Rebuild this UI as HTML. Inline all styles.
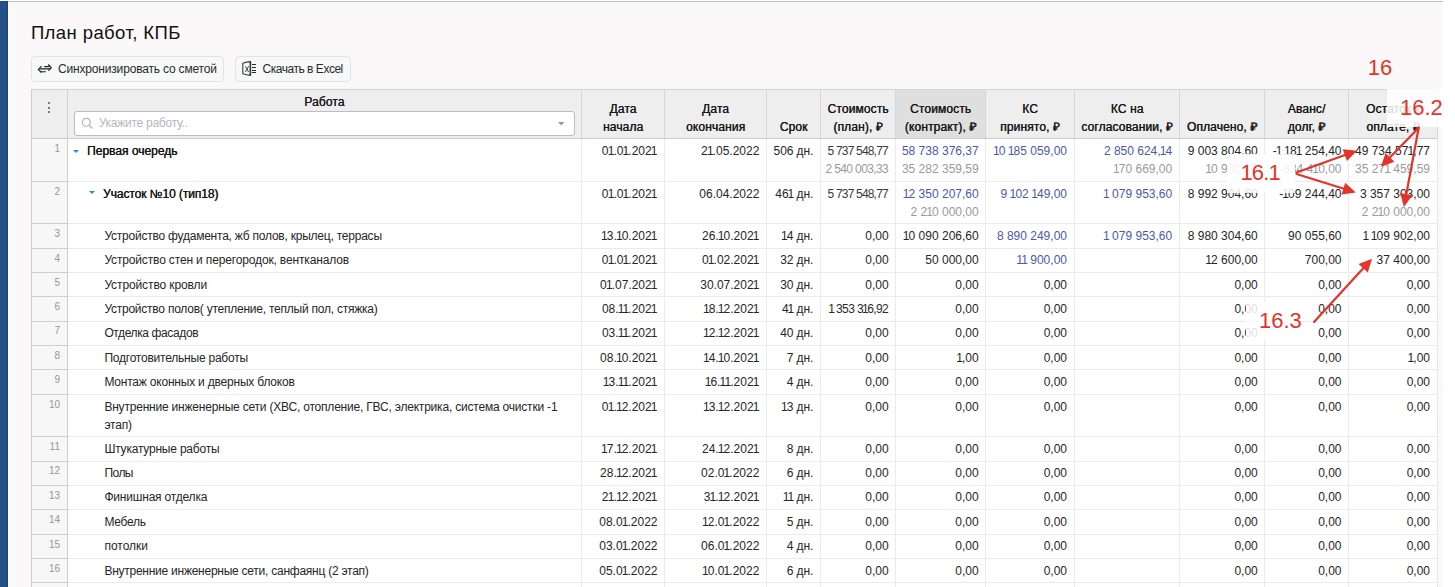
<!DOCTYPE html>
<html><head><meta charset="utf-8">
<style>
html,body{margin:0;padding:0;}
body{width:1455px;height:587px;overflow:hidden;background:#fff;position:relative;font-family:"Liberation Sans",sans-serif;}
.a{position:absolute;}
.t{position:absolute;white-space:nowrap;line-height:0;font-family:"Liberation Sans",sans-serif;}
</style></head><body>
<!-- left bar + page bg -->
<div class="a" style="left:0;top:1px;width:7px;height:586px;background:#255087"></div>
<div class="a" style="left:7px;top:1px;width:1px;height:586px;background:#17427b"></div>
<div class="a" style="left:8px;top:1px;width:1435px;height:1px;background:#babdc5"></div>
<div class="a" style="left:9px;top:2px;width:1434px;height:585px;background:#faf8f9"></div>

<!-- buttons -->
<div class="a" style="left:31px;top:56px;width:191px;height:24px;border:1px solid #e1e3e4;border-radius:4px;background:#f7f9f9"></div>
<div class="a" style="left:235px;top:56px;width:114px;height:24px;border:1px solid #e1e3e4;border-radius:4px;background:#f7f9f9"></div>
<svg class="a" style="left:34px;top:60px" width="22" height="18" viewBox="34 60 22 18">
  <path d="M48.3 64.5 L51.3 67.7 L48.3 70.7" stroke="#222" stroke-width="1.2" fill="none" stroke-linejoin="miter"/>
  <path d="M41.5 66.2 L38.4 69.4 L41.5 72.6" stroke="#222" stroke-width="1.2" fill="none" stroke-linejoin="miter"/>
  <path d="M39.5 68.9 H50.5 M44.2 66.6 H49.2 M40.5 71.8 H45.8" stroke="#222" stroke-width="1.1" fill="none"/>
</svg>
<svg class="a" style="left:238px;top:58px" width="22" height="20" viewBox="238 58 22 20">
  <path d="M242.8 63.2 Q246.5 62 250.4 61.6 V75.4 Q246.5 75 242.8 73.8 Z" stroke="#3a3a3a" stroke-width="1.1" fill="none"/>
  <path d="M250.4 61.6 V75.4" stroke="#3a3a3a" stroke-width="1.6" fill="none"/>
  <path d="M245.4 66.3 L248.6 72 M248.6 66.3 L245.4 72" stroke="#444" stroke-width="1" fill="none"/>
  <path d="M252 64.5 H256 M252 67.5 H256 M252 70.5 H256 M252 72.5 H256" stroke="#2a2a2a" stroke-width="1" fill="none"/>
</svg>

<!-- table base -->
<div class="a" style="left:31px;top:89px;width:1407px;height:498px;background:#fff"></div>
<!-- header bg -->
<div class="a" style="left:31px;top:89px;width:1407px;height:50px;background:#eeeeee"></div>
<div class="a" style="left:896px;top:90px;width:89px;height:48px;background:#dfdfdf"></div>
<!-- row-number column bg -->
<div class="a" style="left:31px;top:139px;width:37px;height:448px;background:#f7f7f7"></div>
<div class="a" style="left:31px;top:89px;width:1407px;height:1px;background:#d3d3d3"></div>
<div class="a" style="left:31px;top:138px;width:1407px;height:1px;background:#cdcdcd"></div>
<div class="a" style="left:68px;top:181px;width:1369px;height:1px;background:#ebebeb"></div>
<div class="a" style="left:32px;top:181px;width:35px;height:1px;background:#d0d0d0"></div>
<div class="a" style="left:68px;top:223px;width:1369px;height:1px;background:#ebebeb"></div>
<div class="a" style="left:32px;top:223px;width:35px;height:1px;background:#d0d0d0"></div>
<div class="a" style="left:68px;top:248px;width:1369px;height:1px;background:#ebebeb"></div>
<div class="a" style="left:32px;top:248px;width:35px;height:1px;background:#d0d0d0"></div>
<div class="a" style="left:68px;top:272px;width:1369px;height:1px;background:#ebebeb"></div>
<div class="a" style="left:32px;top:272px;width:35px;height:1px;background:#d0d0d0"></div>
<div class="a" style="left:68px;top:296px;width:1369px;height:1px;background:#ebebeb"></div>
<div class="a" style="left:32px;top:296px;width:35px;height:1px;background:#d0d0d0"></div>
<div class="a" style="left:68px;top:321px;width:1369px;height:1px;background:#ebebeb"></div>
<div class="a" style="left:32px;top:321px;width:35px;height:1px;background:#d0d0d0"></div>
<div class="a" style="left:68px;top:345px;width:1369px;height:1px;background:#ebebeb"></div>
<div class="a" style="left:32px;top:345px;width:35px;height:1px;background:#d0d0d0"></div>
<div class="a" style="left:68px;top:369px;width:1369px;height:1px;background:#ebebeb"></div>
<div class="a" style="left:32px;top:369px;width:35px;height:1px;background:#d0d0d0"></div>
<div class="a" style="left:68px;top:394px;width:1369px;height:1px;background:#ebebeb"></div>
<div class="a" style="left:32px;top:394px;width:35px;height:1px;background:#d0d0d0"></div>
<div class="a" style="left:68px;top:436px;width:1369px;height:1px;background:#ebebeb"></div>
<div class="a" style="left:32px;top:436px;width:35px;height:1px;background:#d0d0d0"></div>
<div class="a" style="left:68px;top:461px;width:1369px;height:1px;background:#ebebeb"></div>
<div class="a" style="left:32px;top:461px;width:35px;height:1px;background:#d0d0d0"></div>
<div class="a" style="left:68px;top:485px;width:1369px;height:1px;background:#ebebeb"></div>
<div class="a" style="left:32px;top:485px;width:35px;height:1px;background:#d0d0d0"></div>
<div class="a" style="left:68px;top:509px;width:1369px;height:1px;background:#ebebeb"></div>
<div class="a" style="left:32px;top:509px;width:35px;height:1px;background:#d0d0d0"></div>
<div class="a" style="left:68px;top:534px;width:1369px;height:1px;background:#ebebeb"></div>
<div class="a" style="left:32px;top:534px;width:35px;height:1px;background:#d0d0d0"></div>
<div class="a" style="left:68px;top:558px;width:1369px;height:1px;background:#ebebeb"></div>
<div class="a" style="left:32px;top:558px;width:35px;height:1px;background:#d0d0d0"></div>
<div class="a" style="left:68px;top:582px;width:1369px;height:1px;background:#ebebeb"></div>
<div class="a" style="left:32px;top:582px;width:35px;height:1px;background:#d0d0d0"></div>
<div class="a" style="left:31px;top:89px;width:1px;height:498px;background:#cfcfcf"></div>
<div class="a" style="left:67px;top:89px;width:1px;height:498px;background:#cfcfcf"></div>
<div class="a" style="left:581px;top:90px;width:1px;height:48px;background:#d6d6d6"></div>
<div class="a" style="left:581px;top:139px;width:1px;height:448px;background:#ebebeb"></div>
<div class="a" style="left:664px;top:90px;width:1px;height:48px;background:#d6d6d6"></div>
<div class="a" style="left:664px;top:139px;width:1px;height:448px;background:#ebebeb"></div>
<div class="a" style="left:766px;top:90px;width:1px;height:48px;background:#d6d6d6"></div>
<div class="a" style="left:766px;top:139px;width:1px;height:448px;background:#ebebeb"></div>
<div class="a" style="left:820px;top:90px;width:1px;height:48px;background:#d6d6d6"></div>
<div class="a" style="left:820px;top:139px;width:1px;height:448px;background:#ebebeb"></div>
<div class="a" style="left:895px;top:90px;width:1px;height:48px;background:#d6d6d6"></div>
<div class="a" style="left:895px;top:139px;width:1px;height:448px;background:#ebebeb"></div>
<div class="a" style="left:985px;top:90px;width:1px;height:48px;background:#d6d6d6"></div>
<div class="a" style="left:985px;top:139px;width:1px;height:448px;background:#ebebeb"></div>
<div class="a" style="left:1074px;top:90px;width:1px;height:48px;background:#d6d6d6"></div>
<div class="a" style="left:1074px;top:139px;width:1px;height:448px;background:#ebebeb"></div>
<div class="a" style="left:1179px;top:90px;width:1px;height:48px;background:#d6d6d6"></div>
<div class="a" style="left:1179px;top:139px;width:1px;height:448px;background:#ebebeb"></div>
<div class="a" style="left:1264px;top:90px;width:1px;height:48px;background:#d6d6d6"></div>
<div class="a" style="left:1264px;top:139px;width:1px;height:448px;background:#ebebeb"></div>
<div class="a" style="left:1348px;top:90px;width:1px;height:48px;background:#d6d6d6"></div>
<div class="a" style="left:1348px;top:139px;width:1px;height:448px;background:#ebebeb"></div>
<div class="a" style="left:1437px;top:89px;width:1px;height:50px;background:#d6d6d6"></div>
<div class="a" style="left:1437px;top:139px;width:1px;height:448px;background:#e6e6e6"></div>
<!-- search input -->
<div class="a" style="left:74px;top:111px;width:499px;height:23px;border:1px solid #b9bdc6;border-radius:3px;background:#fff"></div>
<svg class="a" style="left:81px;top:117px" width="13" height="13" viewBox="0 0 13 13">
  <circle cx="5.3" cy="5.3" r="4" stroke="#b4b8c2" stroke-width="1.2" fill="none"/>
  <path d="M8.2 8.2 L11.5 11.5" stroke="#b4b8c2" stroke-width="1.3"/>
</svg>
<svg class="a" style="left:558px;top:122px" width="7" height="4" viewBox="0 0 7 4"><path d="M0 0 H6.5 L3.25 3.5 Z" fill="#9a9a9a"/></svg>
<!-- header dots -->
<div class="a" style="left:48px;top:102px;width:2px;height:2px;background:#555;border-radius:1px"></div>
<div class="a" style="left:48px;top:106.5px;width:2px;height:2px;background:#555;border-radius:1px"></div>
<div class="a" style="left:48px;top:111px;width:2px;height:2px;background:#555;border-radius:1px"></div>
<!-- tree carets -->
<svg class="a" style="left:72.5px;top:149.5px" width="7" height="4" viewBox="0 0 7 4"><path d="M0 0 H6 L3 3 Z" fill="#1e90e6"/></svg>
<svg class="a" style="left:88.8px;top:190.5px" width="7" height="4" viewBox="0 0 7 4"><path d="M0 0 H6 L3 3 Z" fill="#1e90e6"/></svg>

<div class="t" style="left:30.90px;top:32.59px;font-size:18.5px;color:#111;letter-spacing:0.413px">План работ, КПБ</div>
<div class="t" style="left:58.00px;top:68.84px;font-size:12px;color:#2a2a2a;letter-spacing:-0.175px">Синхронизировать со сметой</div>
<div class="t" style="left:262.60px;top:68.84px;font-size:12px;color:#2a2a2a;letter-spacing:-0.478px">Скачать в Excel</div>
<div class="t" style="left:304.20px;top:101.84px;font-size:12px;text-shadow:0.35px 0 0 #1a1a1a;color:#1a1a1a;letter-spacing:0.120px">Работа</div>
<div class="t" style="left:98.70px;top:122.84px;font-size:12px;color:#b3b7c0;letter-spacing:-0.254px">Укажите работу..</div>
<div class="t" style="left:609.53px;top:108.84px;font-size:12px;text-shadow:0.35px 0 0 #1a1a1a;color:#1a1a1a;letter-spacing:0.120px">Дата</div>
<div class="t" style="left:602.88px;top:126.84px;font-size:12px;text-shadow:0.35px 0 0 #1a1a1a;color:#1a1a1a;letter-spacing:0.120px">начала</div>
<div class="t" style="left:702.03px;top:108.84px;font-size:12px;text-shadow:0.35px 0 0 #1a1a1a;color:#1a1a1a;letter-spacing:0.120px">Дата</div>
<div class="t" style="left:685.96px;top:126.84px;font-size:12px;text-shadow:0.35px 0 0 #1a1a1a;color:#1a1a1a;letter-spacing:0.120px">окончания</div>
<div class="t" style="left:779.68px;top:126.84px;font-size:12px;text-shadow:0.35px 0 0 #1a1a1a;color:#1a1a1a;letter-spacing:0.120px">Срок</div>
<div class="t" style="left:827.48px;top:108.84px;font-size:12px;text-shadow:0.35px 0 0 #1a1a1a;color:#1a1a1a;letter-spacing:0.120px">Стоимость</div>
<div class="t" style="left:833.29px;top:126.84px;font-size:12px;text-shadow:0.35px 0 0 #1a1a1a;color:#1a1a1a;letter-spacing:0.120px">(план), ₽</div>
<div class="t" style="left:909.98px;top:108.84px;font-size:12px;text-shadow:0.35px 0 0 #1a1a1a;color:#1a1a1a;letter-spacing:0.120px">Стоимость</div>
<div class="t" style="left:904.74px;top:126.84px;font-size:12px;text-shadow:0.35px 0 0 #1a1a1a;color:#1a1a1a;letter-spacing:0.120px">(контракт), ₽</div>
<div class="t" style="left:1022.18px;top:108.84px;font-size:12px;text-shadow:0.35px 0 0 #1a1a1a;color:#1a1a1a;letter-spacing:0.120px">КС</div>
<div class="t" style="left:1000.11px;top:126.84px;font-size:12px;text-shadow:0.35px 0 0 #1a1a1a;color:#1a1a1a;letter-spacing:0.120px">принято, ₽</div>
<div class="t" style="left:1110.68px;top:108.84px;font-size:12px;text-shadow:0.35px 0 0 #1a1a1a;color:#1a1a1a;letter-spacing:0.120px">КС на</div>
<div class="t" style="left:1081.15px;top:126.84px;font-size:12px;text-shadow:0.35px 0 0 #1a1a1a;color:#1a1a1a;letter-spacing:0.120px">согласовании, ₽</div>
<div class="t" style="left:1186.83px;top:126.84px;font-size:12px;text-shadow:0.35px 0 0 #1a1a1a;color:#1a1a1a;letter-spacing:0.120px">Оплачено, ₽</div>
<div class="t" style="left:1287.76px;top:108.84px;font-size:12px;text-shadow:0.35px 0 0 #1a1a1a;color:#1a1a1a;letter-spacing:0.120px">Аванс/</div>
<div class="t" style="left:1287.64px;top:126.84px;font-size:12px;text-shadow:0.35px 0 0 #1a1a1a;color:#1a1a1a;letter-spacing:0.120px">долг, ₽</div>
<div class="t" style="left:1366.03px;top:108.84px;font-size:12px;text-shadow:0.35px 0 0 #1a1a1a;color:#1a1a1a;letter-spacing:0.120px">Остаток к</div>
<div class="t" style="left:1366.37px;top:126.84px;font-size:12px;text-shadow:0.35px 0 0 #1a1a1a;color:#1a1a1a;letter-spacing:0.120px">оплате, ₽</div>
<div class="t" style="left:87.00px;top:150.64px;font-size:12px;text-shadow:0.35px 0 0 #151515;color:#151515;letter-spacing:-0.008px">Первая очередь</div>
<div class="t" style="left:54.44px;top:149.14px;font-size:10px;color:#969696;letter-spacing:0.000px">1</div>
<div class="t" style="left:103.00px;top:193.84px;font-size:12px;text-shadow:0.35px 0 0 #151515;color:#151515;letter-spacing:-0.081px">Участок №10 (тип18)</div>
<div class="t" style="left:54.44px;top:192.34px;font-size:10px;color:#969696;letter-spacing:0.000px">2</div>
<div class="t" style="left:104.40px;top:235.94px;font-size:12px;color:#262626;letter-spacing:-0.225px">Устройство фудамента, жб полов, крылец, террасы</div>
<div class="t" style="left:54.44px;top:234.44px;font-size:10px;color:#969696;letter-spacing:0.000px">3</div>
<div class="t" style="left:104.40px;top:260.24px;font-size:12px;color:#262626;letter-spacing:-0.150px">Устройство стен и перегородок, вентканалов</div>
<div class="t" style="left:54.44px;top:258.74px;font-size:10px;color:#969696;letter-spacing:0.000px">4</div>
<div class="t" style="left:104.40px;top:284.54px;font-size:12px;color:#262626;letter-spacing:-0.107px">Устройство кровли</div>
<div class="t" style="left:54.44px;top:283.04px;font-size:10px;color:#969696;letter-spacing:0.000px">5</div>
<div class="t" style="left:104.40px;top:308.74px;font-size:12px;color:#262626;letter-spacing:-0.236px">Устройство полов( утепление, теплый пол, стяжка)</div>
<div class="t" style="left:54.44px;top:307.24px;font-size:10px;color:#969696;letter-spacing:0.000px">6</div>
<div class="t" style="left:104.40px;top:332.74px;font-size:12px;color:#262626;letter-spacing:-0.380px">Отделка фасадов</div>
<div class="t" style="left:54.44px;top:331.24px;font-size:10px;color:#969696;letter-spacing:0.000px">7</div>
<div class="t" style="left:104.40px;top:357.64px;font-size:12px;color:#262626;letter-spacing:-0.222px">Подготовительные работы</div>
<div class="t" style="left:54.44px;top:356.14px;font-size:10px;color:#969696;letter-spacing:0.000px">8</div>
<div class="t" style="left:104.40px;top:381.74px;font-size:12px;color:#262626;letter-spacing:-0.203px">Монтаж оконных и дверных блоков</div>
<div class="t" style="left:54.44px;top:380.24px;font-size:10px;color:#969696;letter-spacing:0.000px">9</div>
<div class="t" style="left:104.40px;top:406.74px;font-size:12px;color:#262626;letter-spacing:-0.201px">Внутренние инженерные сети (ХВС, отопление, ГВС, электрика, система очистки -1</div>
<div class="t" style="left:48.88px;top:405.24px;font-size:10px;color:#969696;letter-spacing:0.000px">10</div>
<div class="t" style="left:104.40px;top:448.64px;font-size:12px;color:#262626;letter-spacing:-0.208px">Штукатурные работы</div>
<div class="t" style="left:49.61px;top:447.14px;font-size:10px;color:#969696;letter-spacing:0.000px">11</div>
<div class="t" style="left:104.40px;top:472.84px;font-size:12px;color:#262626;letter-spacing:-0.524px">Полы</div>
<div class="t" style="left:48.88px;top:471.34px;font-size:10px;color:#969696;letter-spacing:0.000px">12</div>
<div class="t" style="left:104.40px;top:497.44px;font-size:12px;color:#262626;letter-spacing:-0.193px">Финишная отделка</div>
<div class="t" style="left:48.88px;top:495.94px;font-size:10px;color:#969696;letter-spacing:0.000px">13</div>
<div class="t" style="left:104.40px;top:521.64px;font-size:12px;color:#262626;letter-spacing:-0.247px">Мебель</div>
<div class="t" style="left:48.88px;top:520.13px;font-size:10px;color:#969696;letter-spacing:0.000px">14</div>
<div class="t" style="left:104.40px;top:546.04px;font-size:12px;color:#262626;letter-spacing:-0.007px">потолки</div>
<div class="t" style="left:48.88px;top:544.53px;font-size:10px;color:#969696;letter-spacing:0.000px">15</div>
<div class="t" style="left:104.40px;top:570.84px;font-size:12px;color:#262626;letter-spacing:-0.250px">Внутренние инженерные сети, санфаянц (2 этап)</div>
<div class="t" style="left:48.88px;top:569.33px;font-size:10px;color:#969696;letter-spacing:0.000px">16</div>
<div class="t" style="left:104.40px;top:424.64px;font-size:12px;color:#262626;letter-spacing:-0.198px">этап)</div>
<div class="t" style="left:601.87px;top:150.64px;font-size:12px;color:#262626;letter-spacing:0.000px">0<span style="margin-left:-0.90px;letter-spacing:-0.900px">1</span>.0<span style="margin-left:-0.90px;letter-spacing:-0.900px">1</span>.202<span style="margin-left:-0.90px;letter-spacing:-0.900px">1</span></div>
<div class="t" style="left:701.10px;top:150.64px;font-size:12px;color:#262626;letter-spacing:0.000px">2<span style="margin-left:-0.90px;letter-spacing:-0.900px">1</span>.05.2022</div>
<div class="t" style="left:773.57px;top:150.64px;font-size:12px;color:#262626;letter-spacing:-0.100px">506 дн.</div>
<div class="t" style="left:601.87px;top:193.84px;font-size:12px;color:#262626;letter-spacing:0.000px">0<span style="margin-left:-0.90px;letter-spacing:-0.900px">1</span>.0<span style="margin-left:-0.90px;letter-spacing:-0.900px">1</span>.202<span style="margin-left:-0.90px;letter-spacing:-0.900px">1</span></div>
<div class="t" style="left:699.34px;top:193.84px;font-size:12px;color:#262626;letter-spacing:0.000px">06.04.2022</div>
<div class="t" style="left:775.34px;top:193.84px;font-size:12px;color:#262626;letter-spacing:-0.100px">46<span style="margin-left:-0.90px;letter-spacing:-1.000px">1</span> дн.</div>
<div class="t" style="left:601.88px;top:235.94px;font-size:12px;color:#262626;letter-spacing:0.000px"><span style="margin-left:-0.90px;letter-spacing:-0.900px">1</span>3.<span style="margin-left:-0.90px;letter-spacing:-0.900px">1</span>0.202<span style="margin-left:-0.90px;letter-spacing:-0.900px">1</span></div>
<div class="t" style="left:702.00px;top:235.94px;font-size:12px;color:#262626;letter-spacing:0.000px">26.<span style="margin-left:-0.90px;letter-spacing:-0.900px">1</span>0.202<span style="margin-left:-0.90px;letter-spacing:-0.900px">1</span></div>
<div class="t" style="left:781.92px;top:235.94px;font-size:12px;color:#262626;letter-spacing:-0.100px"><span style="margin-left:-0.90px;letter-spacing:-1.000px">1</span>4 дн.</div>
<div class="t" style="left:601.87px;top:260.24px;font-size:12px;color:#262626;letter-spacing:0.000px">0<span style="margin-left:-0.90px;letter-spacing:-0.900px">1</span>.0<span style="margin-left:-0.90px;letter-spacing:-0.900px">1</span>.202<span style="margin-left:-0.90px;letter-spacing:-0.900px">1</span></div>
<div class="t" style="left:701.98px;top:260.24px;font-size:12px;color:#262626;letter-spacing:0.000px">0<span style="margin-left:-0.90px;letter-spacing:-0.900px">1</span>.02.202<span style="margin-left:-0.90px;letter-spacing:-0.900px">1</span></div>
<div class="t" style="left:780.15px;top:260.24px;font-size:12px;color:#262626;letter-spacing:-0.100px">32 дн.</div>
<div class="t" style="left:600.08px;top:284.54px;font-size:12px;color:#262626;letter-spacing:0.000px">0<span style="margin-left:-0.90px;letter-spacing:-0.900px">1</span>.07.202<span style="margin-left:-0.90px;letter-spacing:-0.900px">1</span></div>
<div class="t" style="left:700.22px;top:284.54px;font-size:12px;color:#262626;letter-spacing:0.000px">30.07.202<span style="margin-left:-0.90px;letter-spacing:-0.900px">1</span></div>
<div class="t" style="left:780.15px;top:284.54px;font-size:12px;color:#262626;letter-spacing:-0.100px">30 дн.</div>
<div class="t" style="left:601.88px;top:308.74px;font-size:12px;color:#262626;letter-spacing:0.000px">08.<span style="margin-left:-0.90px;letter-spacing:-0.900px">1</span><span style="margin-left:-0.90px;letter-spacing:-0.900px">1</span>.202<span style="margin-left:-0.90px;letter-spacing:-0.900px">1</span></div>
<div class="t" style="left:703.78px;top:308.74px;font-size:12px;color:#262626;letter-spacing:0.000px"><span style="margin-left:-0.90px;letter-spacing:-0.900px">1</span>8.<span style="margin-left:-0.90px;letter-spacing:-0.900px">1</span>2.202<span style="margin-left:-0.90px;letter-spacing:-0.900px">1</span></div>
<div class="t" style="left:781.92px;top:308.74px;font-size:12px;color:#262626;letter-spacing:-0.100px">4<span style="margin-left:-0.90px;letter-spacing:-1.000px">1</span> дн.</div>
<div class="t" style="left:601.88px;top:332.74px;font-size:12px;color:#262626;letter-spacing:0.000px">03.<span style="margin-left:-0.90px;letter-spacing:-0.900px">1</span><span style="margin-left:-0.90px;letter-spacing:-0.900px">1</span>.202<span style="margin-left:-0.90px;letter-spacing:-0.900px">1</span></div>
<div class="t" style="left:703.78px;top:332.74px;font-size:12px;color:#262626;letter-spacing:0.000px"><span style="margin-left:-0.90px;letter-spacing:-0.900px">1</span>2.<span style="margin-left:-0.90px;letter-spacing:-0.900px">1</span>2.202<span style="margin-left:-0.90px;letter-spacing:-0.900px">1</span></div>
<div class="t" style="left:780.15px;top:332.74px;font-size:12px;color:#262626;letter-spacing:-0.100px">40 дн.</div>
<div class="t" style="left:600.10px;top:357.64px;font-size:12px;color:#262626;letter-spacing:0.000px">08.<span style="margin-left:-0.90px;letter-spacing:-0.900px">1</span>0.202<span style="margin-left:-0.90px;letter-spacing:-0.900px">1</span></div>
<div class="t" style="left:703.78px;top:357.64px;font-size:12px;color:#262626;letter-spacing:0.000px"><span style="margin-left:-0.90px;letter-spacing:-0.900px">1</span>4.<span style="margin-left:-0.90px;letter-spacing:-0.900px">1</span>0.202<span style="margin-left:-0.90px;letter-spacing:-0.900px">1</span></div>
<div class="t" style="left:786.72px;top:357.64px;font-size:12px;color:#262626;letter-spacing:-0.100px">7 дн.</div>
<div class="t" style="left:603.66px;top:381.74px;font-size:12px;color:#262626;letter-spacing:0.000px"><span style="margin-left:-0.90px;letter-spacing:-0.900px">1</span>3.<span style="margin-left:-0.90px;letter-spacing:-0.900px">1</span><span style="margin-left:-0.90px;letter-spacing:-0.900px">1</span>.202<span style="margin-left:-0.90px;letter-spacing:-0.900px">1</span></div>
<div class="t" style="left:705.56px;top:381.74px;font-size:12px;color:#262626;letter-spacing:0.000px"><span style="margin-left:-0.90px;letter-spacing:-0.900px">1</span>6.<span style="margin-left:-0.90px;letter-spacing:-0.900px">1</span><span style="margin-left:-0.90px;letter-spacing:-0.900px">1</span>.202<span style="margin-left:-0.90px;letter-spacing:-0.900px">1</span></div>
<div class="t" style="left:786.72px;top:381.74px;font-size:12px;color:#262626;letter-spacing:-0.100px">4 дн.</div>
<div class="t" style="left:601.87px;top:406.74px;font-size:12px;color:#262626;letter-spacing:0.000px">0<span style="margin-left:-0.90px;letter-spacing:-0.900px">1</span>.<span style="margin-left:-0.90px;letter-spacing:-0.900px">1</span>2.202<span style="margin-left:-0.90px;letter-spacing:-0.900px">1</span></div>
<div class="t" style="left:703.78px;top:406.74px;font-size:12px;color:#262626;letter-spacing:0.000px"><span style="margin-left:-0.90px;letter-spacing:-0.900px">1</span>3.<span style="margin-left:-0.90px;letter-spacing:-0.900px">1</span>2.202<span style="margin-left:-0.90px;letter-spacing:-0.900px">1</span></div>
<div class="t" style="left:781.92px;top:406.74px;font-size:12px;color:#262626;letter-spacing:-0.100px"><span style="margin-left:-0.90px;letter-spacing:-1.000px">1</span>3 дн.</div>
<div class="t" style="left:601.88px;top:448.64px;font-size:12px;color:#262626;letter-spacing:0.000px"><span style="margin-left:-0.90px;letter-spacing:-0.900px">1</span>7.<span style="margin-left:-0.90px;letter-spacing:-0.900px">1</span>2.202<span style="margin-left:-0.90px;letter-spacing:-0.900px">1</span></div>
<div class="t" style="left:702.00px;top:448.64px;font-size:12px;color:#262626;letter-spacing:0.000px">24.<span style="margin-left:-0.90px;letter-spacing:-0.900px">1</span>2.202<span style="margin-left:-0.90px;letter-spacing:-0.900px">1</span></div>
<div class="t" style="left:786.72px;top:448.64px;font-size:12px;color:#262626;letter-spacing:-0.100px">8 дн.</div>
<div class="t" style="left:600.10px;top:472.84px;font-size:12px;color:#262626;letter-spacing:0.000px">28.<span style="margin-left:-0.90px;letter-spacing:-0.900px">1</span>2.202<span style="margin-left:-0.90px;letter-spacing:-0.900px">1</span></div>
<div class="t" style="left:701.12px;top:472.84px;font-size:12px;color:#262626;letter-spacing:0.000px">02.0<span style="margin-left:-0.90px;letter-spacing:-0.900px">1</span>.2022</div>
<div class="t" style="left:786.72px;top:472.84px;font-size:12px;color:#262626;letter-spacing:-0.100px">6 дн.</div>
<div class="t" style="left:601.87px;top:497.44px;font-size:12px;color:#262626;letter-spacing:0.000px">2<span style="margin-left:-0.90px;letter-spacing:-0.900px">1</span>.<span style="margin-left:-0.90px;letter-spacing:-0.900px">1</span>2.202<span style="margin-left:-0.90px;letter-spacing:-0.900px">1</span></div>
<div class="t" style="left:703.77px;top:497.44px;font-size:12px;color:#262626;letter-spacing:0.000px">3<span style="margin-left:-0.90px;letter-spacing:-0.900px">1</span>.<span style="margin-left:-0.90px;letter-spacing:-0.900px">1</span>2.202<span style="margin-left:-0.90px;letter-spacing:-0.900px">1</span></div>
<div class="t" style="left:783.70px;top:497.44px;font-size:12px;color:#262626;letter-spacing:-0.100px"><span style="margin-left:-0.90px;letter-spacing:-1.000px">1</span><span style="margin-left:-0.90px;letter-spacing:-1.000px">1</span> дн.</div>
<div class="t" style="left:599.22px;top:521.64px;font-size:12px;color:#262626;letter-spacing:0.000px">08.0<span style="margin-left:-0.90px;letter-spacing:-0.900px">1</span>.2022</div>
<div class="t" style="left:702.90px;top:521.64px;font-size:12px;color:#262626;letter-spacing:0.000px"><span style="margin-left:-0.90px;letter-spacing:-0.900px">1</span>2.0<span style="margin-left:-0.90px;letter-spacing:-0.900px">1</span>.2022</div>
<div class="t" style="left:786.72px;top:521.64px;font-size:12px;color:#262626;letter-spacing:-0.100px">5 дн.</div>
<div class="t" style="left:599.22px;top:546.04px;font-size:12px;color:#262626;letter-spacing:0.000px">03.0<span style="margin-left:-0.90px;letter-spacing:-0.900px">1</span>.2022</div>
<div class="t" style="left:701.12px;top:546.04px;font-size:12px;color:#262626;letter-spacing:0.000px">06.0<span style="margin-left:-0.90px;letter-spacing:-0.900px">1</span>.2022</div>
<div class="t" style="left:786.72px;top:546.04px;font-size:12px;color:#262626;letter-spacing:-0.100px">4 дн.</div>
<div class="t" style="left:599.22px;top:570.84px;font-size:12px;color:#262626;letter-spacing:0.000px">05.0<span style="margin-left:-0.90px;letter-spacing:-0.900px">1</span>.2022</div>
<div class="t" style="left:702.90px;top:570.84px;font-size:12px;color:#262626;letter-spacing:0.000px"><span style="margin-left:-0.90px;letter-spacing:-0.900px">1</span>0.0<span style="margin-left:-0.90px;letter-spacing:-0.900px">1</span>.2022</div>
<div class="t" style="left:786.72px;top:570.84px;font-size:12px;color:#262626;letter-spacing:-0.100px">6 дн.</div>
<div class="t" style="left:827.50px;top:150.64px;font-size:12px;color:#3a3a3a;letter-spacing:-0.807px">5 737 548,77</div>
<div class="t" style="left:825.50px;top:168.64px;font-size:12px;color:#9a9a9a;letter-spacing:-0.625px">2 540 003,33</div>
<div class="t" style="left:901.95px;top:150.64px;font-size:12px;color:#4d58ad;letter-spacing:0.000px">58 738 376,37</div>
<div class="t" style="left:901.95px;top:168.64px;font-size:12px;color:#9a9a9a;letter-spacing:0.000px">35 282 359,59</div>
<div class="t" style="left:993.81px;top:150.64px;font-size:12px;color:#4d58ad;letter-spacing:0.000px"><span style="margin-left:-0.90px;letter-spacing:-0.900px">1</span>0 <span style="margin-left:-0.90px;letter-spacing:-0.900px">1</span>85 059,00</div>
<div class="t" style="left:1103.90px;top:150.64px;font-size:12px;color:#4d58ad;letter-spacing:0.000px">2 850 624,<span style="margin-left:-0.90px;letter-spacing:-0.900px">1</span>4</div>
<div class="t" style="left:1113.92px;top:168.64px;font-size:12px;color:#9a9a9a;letter-spacing:0.000px"><span style="margin-left:-0.90px;letter-spacing:-0.900px">1</span>70 669,00</div>
<div class="t" style="left:1187.72px;top:150.64px;font-size:12px;color:#262626;letter-spacing:0.000px">9 003 804,60</div>
<div class="t" style="left:1206.19px;top:168.64px;font-size:12px;color:#9a9a9a;letter-spacing:0.000px"><span style="margin-left:-0.90px;letter-spacing:-0.900px">1</span>0 900,00</div>
<div class="t" style="left:1272.75px;top:150.64px;font-size:12px;color:#262626;letter-spacing:0.000px">-<span style="margin-left:-0.90px;letter-spacing:-0.900px">1</span> <span style="margin-left:-0.90px;letter-spacing:-0.900px">1</span>8<span style="margin-left:-0.90px;letter-spacing:-0.900px">1</span> 254,40</div>
<div class="t" style="left:1279.22px;top:168.64px;font-size:12px;color:#9a9a9a;letter-spacing:0.000px">-834 4<span style="margin-left:-0.90px;letter-spacing:-0.900px">1</span>0,00</div>
<div class="t" style="left:1355.03px;top:150.64px;font-size:12px;color:#262626;letter-spacing:0.000px">49 734 57<span style="margin-left:-0.90px;letter-spacing:-0.900px">1</span>,77</div>
<div class="t" style="left:1355.03px;top:168.64px;font-size:12px;color:#9a9a9a;letter-spacing:0.000px">35 27<span style="margin-left:-0.90px;letter-spacing:-0.900px">1</span> 459,59</div>
<div class="t" style="left:827.50px;top:193.84px;font-size:12px;color:#3a3a3a;letter-spacing:-0.807px">5 737 548,77</div>
<div class="t" style="left:903.73px;top:193.84px;font-size:12px;color:#4d58ad;letter-spacing:0.000px"><span style="margin-left:-0.90px;letter-spacing:-0.900px">1</span>2 350 207,60</div>
<div class="t" style="left:910.40px;top:211.84px;font-size:12px;color:#9a9a9a;letter-spacing:0.000px">2 2<span style="margin-left:-0.90px;letter-spacing:-0.900px">1</span>0 000,00</div>
<div class="t" style="left:1000.48px;top:193.84px;font-size:12px;color:#4d58ad;letter-spacing:0.000px">9 <span style="margin-left:-0.90px;letter-spacing:-0.900px">1</span>02 <span style="margin-left:-0.90px;letter-spacing:-0.900px">1</span>49,00</div>
<div class="t" style="left:1103.90px;top:193.84px;font-size:12px;color:#4d58ad;letter-spacing:0.000px"><span style="margin-left:-0.90px;letter-spacing:-0.900px">1</span> 079 953,60</div>
<div class="t" style="left:1187.72px;top:193.84px;font-size:12px;color:#262626;letter-spacing:0.000px">8 992 904,60</div>
<div class="t" style="left:1279.22px;top:193.84px;font-size:12px;color:#262626;letter-spacing:0.000px">-<span style="margin-left:-0.90px;letter-spacing:-0.900px">1</span>09 244,40</div>
<div class="t" style="left:1359.92px;top:193.84px;font-size:12px;color:#262626;letter-spacing:0.000px">3 357 303,00</div>
<div class="t" style="left:1361.70px;top:211.84px;font-size:12px;color:#9a9a9a;letter-spacing:0.000px">2 2<span style="margin-left:-0.90px;letter-spacing:-0.900px">1</span>0 000,00</div>
<div class="t" style="left:865.34px;top:235.94px;font-size:12px;color:#262626;letter-spacing:0.000px">0,00</div>
<div class="t" style="left:903.73px;top:235.94px;font-size:12px;color:#262626;letter-spacing:0.000px"><span style="margin-left:-0.90px;letter-spacing:-0.900px">1</span>0 090 206,60</div>
<div class="t" style="left:996.92px;top:235.94px;font-size:12px;color:#4d58ad;letter-spacing:0.000px">8 890 249,00</div>
<div class="t" style="left:1103.90px;top:235.94px;font-size:12px;color:#4d58ad;letter-spacing:0.000px"><span style="margin-left:-0.90px;letter-spacing:-0.900px">1</span> 079 953,60</div>
<div class="t" style="left:1187.72px;top:235.94px;font-size:12px;color:#262626;letter-spacing:0.000px">8 980 304,60</div>
<div class="t" style="left:1288.11px;top:235.94px;font-size:12px;color:#262626;letter-spacing:0.000px">90 055,60</div>
<div class="t" style="left:1363.48px;top:235.94px;font-size:12px;color:#262626;letter-spacing:0.000px"><span style="margin-left:-0.90px;letter-spacing:-0.900px">1</span> <span style="margin-left:-0.90px;letter-spacing:-0.900px">1</span>09 902,00</div>
<div class="t" style="left:865.34px;top:260.24px;font-size:12px;color:#262626;letter-spacing:0.000px">0,00</div>
<div class="t" style="left:925.31px;top:260.24px;font-size:12px;color:#262626;letter-spacing:0.000px">50 000,00</div>
<div class="t" style="left:1017.17px;top:260.24px;font-size:12px;color:#4d58ad;letter-spacing:0.000px"><span style="margin-left:-0.90px;letter-spacing:-0.900px">1</span><span style="margin-left:-0.90px;letter-spacing:-0.900px">1</span> 900,00</div>
<div class="t" style="left:1206.19px;top:260.24px;font-size:12px;color:#262626;letter-spacing:0.000px"><span style="margin-left:-0.90px;letter-spacing:-0.900px">1</span>2 600,00</div>
<div class="t" style="left:1304.80px;top:260.24px;font-size:12px;color:#262626;letter-spacing:0.000px">700,00</div>
<div class="t" style="left:1376.61px;top:260.24px;font-size:12px;color:#262626;letter-spacing:0.000px">37 400,00</div>
<div class="t" style="left:865.34px;top:284.54px;font-size:12px;color:#262626;letter-spacing:0.000px">0,00</div>
<div class="t" style="left:955.34px;top:284.54px;font-size:12px;color:#262626;letter-spacing:0.000px">0,00</div>
<div class="t" style="left:1043.64px;top:284.54px;font-size:12px;color:#262626;letter-spacing:0.000px">0,00</div>
<div class="t" style="left:1234.44px;top:284.54px;font-size:12px;color:#262626;letter-spacing:0.000px">0,00</div>
<div class="t" style="left:1318.14px;top:284.54px;font-size:12px;color:#262626;letter-spacing:0.000px">0,00</div>
<div class="t" style="left:1406.64px;top:284.54px;font-size:12px;color:#262626;letter-spacing:0.000px">0,00</div>
<div class="t" style="left:829.10px;top:308.74px;font-size:12px;color:#2a2a2a;letter-spacing:-0.629px"><span style="margin-left:-0.90px;letter-spacing:-1.529px">1</span> 353 3<span style="margin-left:-0.90px;letter-spacing:-1.529px">1</span>6,92</div>
<div class="t" style="left:955.34px;top:308.74px;font-size:12px;color:#262626;letter-spacing:0.000px">0,00</div>
<div class="t" style="left:1043.64px;top:308.74px;font-size:12px;color:#262626;letter-spacing:0.000px">0,00</div>
<div class="t" style="left:1234.44px;top:308.74px;font-size:12px;color:#262626;letter-spacing:0.000px">0,00</div>
<div class="t" style="left:1318.14px;top:308.74px;font-size:12px;color:#262626;letter-spacing:0.000px">0,00</div>
<div class="t" style="left:1406.64px;top:308.74px;font-size:12px;color:#262626;letter-spacing:0.000px">0,00</div>
<div class="t" style="left:865.34px;top:332.74px;font-size:12px;color:#262626;letter-spacing:0.000px">0,00</div>
<div class="t" style="left:955.34px;top:332.74px;font-size:12px;color:#262626;letter-spacing:0.000px">0,00</div>
<div class="t" style="left:1043.64px;top:332.74px;font-size:12px;color:#262626;letter-spacing:0.000px">0,00</div>
<div class="t" style="left:1234.44px;top:332.74px;font-size:12px;color:#262626;letter-spacing:0.000px">0,00</div>
<div class="t" style="left:1318.14px;top:332.74px;font-size:12px;color:#262626;letter-spacing:0.000px">0,00</div>
<div class="t" style="left:1406.64px;top:332.74px;font-size:12px;color:#262626;letter-spacing:0.000px">0,00</div>
<div class="t" style="left:865.34px;top:357.64px;font-size:12px;color:#262626;letter-spacing:0.000px">0,00</div>
<div class="t" style="left:957.12px;top:357.64px;font-size:12px;color:#262626;letter-spacing:0.000px"><span style="margin-left:-0.90px;letter-spacing:-0.900px">1</span>,00</div>
<div class="t" style="left:1043.64px;top:357.64px;font-size:12px;color:#262626;letter-spacing:0.000px">0,00</div>
<div class="t" style="left:1234.44px;top:357.64px;font-size:12px;color:#262626;letter-spacing:0.000px">0,00</div>
<div class="t" style="left:1318.14px;top:357.64px;font-size:12px;color:#262626;letter-spacing:0.000px">0,00</div>
<div class="t" style="left:1408.42px;top:357.64px;font-size:12px;color:#262626;letter-spacing:0.000px"><span style="margin-left:-0.90px;letter-spacing:-0.900px">1</span>,00</div>
<div class="t" style="left:865.34px;top:381.74px;font-size:12px;color:#262626;letter-spacing:0.000px">0,00</div>
<div class="t" style="left:955.34px;top:381.74px;font-size:12px;color:#262626;letter-spacing:0.000px">0,00</div>
<div class="t" style="left:1043.64px;top:381.74px;font-size:12px;color:#262626;letter-spacing:0.000px">0,00</div>
<div class="t" style="left:1234.44px;top:381.74px;font-size:12px;color:#262626;letter-spacing:0.000px">0,00</div>
<div class="t" style="left:1318.14px;top:381.74px;font-size:12px;color:#262626;letter-spacing:0.000px">0,00</div>
<div class="t" style="left:1406.64px;top:381.74px;font-size:12px;color:#262626;letter-spacing:0.000px">0,00</div>
<div class="t" style="left:865.34px;top:406.74px;font-size:12px;color:#262626;letter-spacing:0.000px">0,00</div>
<div class="t" style="left:955.34px;top:406.74px;font-size:12px;color:#262626;letter-spacing:0.000px">0,00</div>
<div class="t" style="left:1043.64px;top:406.74px;font-size:12px;color:#262626;letter-spacing:0.000px">0,00</div>
<div class="t" style="left:1234.44px;top:406.74px;font-size:12px;color:#262626;letter-spacing:0.000px">0,00</div>
<div class="t" style="left:1318.14px;top:406.74px;font-size:12px;color:#262626;letter-spacing:0.000px">0,00</div>
<div class="t" style="left:1406.64px;top:406.74px;font-size:12px;color:#262626;letter-spacing:0.000px">0,00</div>
<div class="t" style="left:865.34px;top:448.64px;font-size:12px;color:#262626;letter-spacing:0.000px">0,00</div>
<div class="t" style="left:955.34px;top:448.64px;font-size:12px;color:#262626;letter-spacing:0.000px">0,00</div>
<div class="t" style="left:1043.64px;top:448.64px;font-size:12px;color:#262626;letter-spacing:0.000px">0,00</div>
<div class="t" style="left:1234.44px;top:448.64px;font-size:12px;color:#262626;letter-spacing:0.000px">0,00</div>
<div class="t" style="left:1318.14px;top:448.64px;font-size:12px;color:#262626;letter-spacing:0.000px">0,00</div>
<div class="t" style="left:1406.64px;top:448.64px;font-size:12px;color:#262626;letter-spacing:0.000px">0,00</div>
<div class="t" style="left:865.34px;top:472.84px;font-size:12px;color:#262626;letter-spacing:0.000px">0,00</div>
<div class="t" style="left:955.34px;top:472.84px;font-size:12px;color:#262626;letter-spacing:0.000px">0,00</div>
<div class="t" style="left:1043.64px;top:472.84px;font-size:12px;color:#262626;letter-spacing:0.000px">0,00</div>
<div class="t" style="left:1234.44px;top:472.84px;font-size:12px;color:#262626;letter-spacing:0.000px">0,00</div>
<div class="t" style="left:1318.14px;top:472.84px;font-size:12px;color:#262626;letter-spacing:0.000px">0,00</div>
<div class="t" style="left:1406.64px;top:472.84px;font-size:12px;color:#262626;letter-spacing:0.000px">0,00</div>
<div class="t" style="left:865.34px;top:497.44px;font-size:12px;color:#262626;letter-spacing:0.000px">0,00</div>
<div class="t" style="left:955.34px;top:497.44px;font-size:12px;color:#262626;letter-spacing:0.000px">0,00</div>
<div class="t" style="left:1043.64px;top:497.44px;font-size:12px;color:#262626;letter-spacing:0.000px">0,00</div>
<div class="t" style="left:1234.44px;top:497.44px;font-size:12px;color:#262626;letter-spacing:0.000px">0,00</div>
<div class="t" style="left:1318.14px;top:497.44px;font-size:12px;color:#262626;letter-spacing:0.000px">0,00</div>
<div class="t" style="left:1406.64px;top:497.44px;font-size:12px;color:#262626;letter-spacing:0.000px">0,00</div>
<div class="t" style="left:865.34px;top:521.64px;font-size:12px;color:#262626;letter-spacing:0.000px">0,00</div>
<div class="t" style="left:955.34px;top:521.64px;font-size:12px;color:#262626;letter-spacing:0.000px">0,00</div>
<div class="t" style="left:1043.64px;top:521.64px;font-size:12px;color:#262626;letter-spacing:0.000px">0,00</div>
<div class="t" style="left:1234.44px;top:521.64px;font-size:12px;color:#262626;letter-spacing:0.000px">0,00</div>
<div class="t" style="left:1318.14px;top:521.64px;font-size:12px;color:#262626;letter-spacing:0.000px">0,00</div>
<div class="t" style="left:1406.64px;top:521.64px;font-size:12px;color:#262626;letter-spacing:0.000px">0,00</div>
<div class="t" style="left:865.34px;top:546.04px;font-size:12px;color:#262626;letter-spacing:0.000px">0,00</div>
<div class="t" style="left:955.34px;top:546.04px;font-size:12px;color:#262626;letter-spacing:0.000px">0,00</div>
<div class="t" style="left:1043.64px;top:546.04px;font-size:12px;color:#262626;letter-spacing:0.000px">0,00</div>
<div class="t" style="left:1234.44px;top:546.04px;font-size:12px;color:#262626;letter-spacing:0.000px">0,00</div>
<div class="t" style="left:1318.14px;top:546.04px;font-size:12px;color:#262626;letter-spacing:0.000px">0,00</div>
<div class="t" style="left:1406.64px;top:546.04px;font-size:12px;color:#262626;letter-spacing:0.000px">0,00</div>
<div class="t" style="left:865.34px;top:570.84px;font-size:12px;color:#262626;letter-spacing:0.000px">0,00</div>
<div class="t" style="left:955.34px;top:570.84px;font-size:12px;color:#262626;letter-spacing:0.000px">0,00</div>
<div class="t" style="left:1043.64px;top:570.84px;font-size:12px;color:#262626;letter-spacing:0.000px">0,00</div>
<div class="t" style="left:1234.44px;top:570.84px;font-size:12px;color:#262626;letter-spacing:0.000px">0,00</div>
<div class="t" style="left:1318.14px;top:570.84px;font-size:12px;color:#262626;letter-spacing:0.000px">0,00</div>
<div class="t" style="left:1406.64px;top:570.84px;font-size:12px;color:#262626;letter-spacing:0.000px">0,00</div>

<!-- annotation overlays -->
<div class="a" style="left:1387px;top:89px;width:56px;height:38px;background:rgba(255,255,255,0.86)"></div>
<div class="a" style="left:1227px;top:154px;width:68px;height:39px;background:rgba(255,255,255,0.86)"></div>
<div class="a" style="left:1246px;top:301px;width:55px;height:39px;background:rgba(255,255,255,0.86)"></div>
<svg class="a" style="left:0;top:0" width="1455" height="587" viewBox="0 0 1455 587"><line x1="1296.5" y1="172.5" x2="1348.4" y2="153.8" stroke="#e3342b" stroke-width="2.2" stroke-linecap="round"/><polygon points="1357.0,150.7 1346.9,160.9 1342.7,149.3" fill="#e3342b"/><line x1="1296.5" y1="174.0" x2="1347.1" y2="189.8" stroke="#e3342b" stroke-width="2.2" stroke-linecap="round"/><polygon points="1355.8,192.5 1341.5,194.5 1345.2,182.7" fill="#e3342b"/><line x1="1418.7" y1="127.7" x2="1387.2" y2="160.3" stroke="#e3342b" stroke-width="2.2" stroke-linecap="round"/><polygon points="1380.9,166.8 1385.5,153.1 1394.4,161.8" fill="#e3342b"/><line x1="1418.7" y1="127.7" x2="1405.6" y2="198.0" stroke="#e3342b" stroke-width="2.2" stroke-linecap="round"/><polygon points="1403.9,206.9 1400.2,193.0 1412.4,195.3" fill="#e3342b"/><line x1="1314.0" y1="321.9" x2="1365.8" y2="265.4" stroke="#e3342b" stroke-width="2.2" stroke-linecap="round"/><polygon points="1372.0,258.7 1367.8,272.5 1358.6,264.1" fill="#e3342b"/></svg>
<div class="t" style="left:1367.80px;top:68.38px;font-size:22px;color:#e5332a;letter-spacing:0.000px">16</div>
<div class="t" style="left:1400.00px;top:107.58px;font-size:22px;color:#e5332a;letter-spacing:0.000px">16.2</div>
<div class="t" style="left:1240.50px;top:173.38px;font-size:22px;color:#e5332a;letter-spacing:-0.900px">16.1</div>
<div class="t" style="left:1259.00px;top:321.18px;font-size:22px;color:#e5332a;letter-spacing:0.000px">16.3</div>
</body></html>
